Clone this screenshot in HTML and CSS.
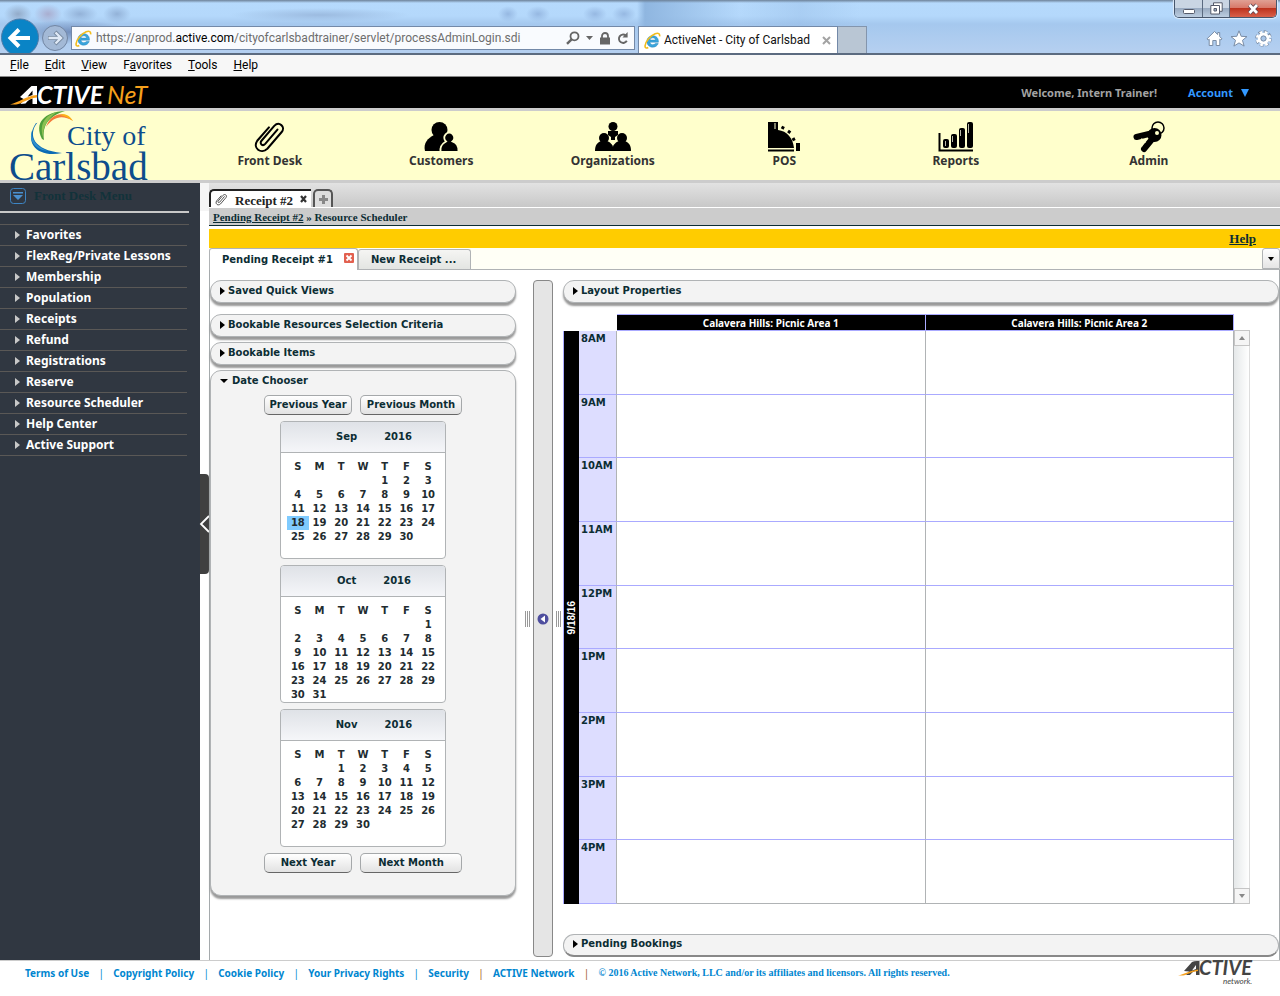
FILE: index.html
```html
<!DOCTYPE html>
<html lang="en">
<head>
<meta charset="utf-8">
<title>ActiveNet - City of Carlsbad</title>
<link rel="stylesheet" href="styles.css">
</head>
<body>
<svg class="defs" width="0" height="0" aria-hidden="true">
  <defs>
    <symbol id="ie" viewBox="0 0 16 16">
      <path d="M13.6 9.6H5.600c.2 1.500 1.300 2.300 2.700 2.300 1 0 1.800-.4 2.300-1.100h2.800c-.8 2.200-2.700 3.500-5.200 3.500C4.900 14.300 2.700 12 2.700 8.900s2.300-5.400 5.500-5.400c3.500 0 5.600 2.500 5.400 6.100zM5.700 7.600h5.100c-.2-1.300-1.100-2.100-2.500-2.100-1.400 0-2.400.8-2.600 2.100z" fill="#3aa5dc" stroke="#1c7fb8" stroke-width=".4"/>
      <path d="M4 14.600c-1.800 1-3.200.5-3-1.600C1.300 9.300 5.800 3.600 10.500 1.700c3-1.200 4.600-.1 4.200 2.500" fill="none" stroke="#f2bd1d" stroke-width="1.500"/>
    </symbol>
    <symbol id="clip" viewBox="0 0 32 30">
      <path d="M23 8 11.500 21.500c-2.500 2.600-5.800-.4-3.500-3L20 4.500c4.500-4.600 11 .8 7 5.800L13.500 26C7.500 31.500-.6 25.500 4 18.500L15 6" fill="none" stroke="currentColor" stroke-width="1.900" stroke-linecap="round"/>
    </symbol>
  </defs>
</svg>

<header class="chrome">
  <div class="titlebar">
    <div class="winctl">
      <button class="min" aria-label="Minimize"><svg width="14" height="8" viewBox="0 0 14 8"><rect x="1.500" y="2.500" width="11" height="4" rx="1" fill="#fff" stroke="#555a6a"/></svg></button>
      <button class="max" aria-label="Restore"><svg width="13" height="13" viewBox="0 0 13 13"><path d="M3.500 3V.8h8.700v8.500H10" fill="#fff" stroke="#555a6a"/><path d="M.8 3.500h8.700v8.500H.8zM4 6.500v2.500h2.500V6.500z" fill="#fff" fill-rule="evenodd" stroke="#555a6a"/></svg></button>
      <button class="cls" aria-label="Close window"><svg width="13" height="12" viewBox="0 0 13 12"><path d="M2.500 2l7.500 8M10 2 2.500 10" stroke="#5b4350" stroke-width="4.400"/><path d="M2.500 2l7.500 8M10 2 2.500 10" stroke="#fff" stroke-width="2.800"/></svg></button>
    </div>
  </div>
  <div class="toolbar">
    <button class="back" aria-label="Back"><svg width="40" height="34" viewBox="0 0 40 34"><circle cx="20" cy="18.500" r="18.500" fill="#0a84c6" stroke="#4e7ba8"/><path d="M11 19h19M19 10.500 10.500 19l8.500 8.500" fill="none" stroke="#fff" stroke-width="4"/></svg></button>
    <button class="fwd" aria-label="Forward"><svg width="28" height="34" viewBox="0 0 28 34"><circle cx="14" cy="19" r="12.500" fill="#a3b9d6" stroke="#7286a3"/><path d="M7 19h12M14 13l6 6-6 6" fill="none" stroke="#76889f" stroke-width="4.200"/><path d="M7.500 19h11M14.500 13.500 20 19l-5.500 5.500" fill="none" stroke="#dfe9f6" stroke-width="2.400"/></svg></button>
    <div class="address">
      <svg width="17" height="17"><use href="#ie"/></svg>
      <span class="url">https://anprod.<b>active.com</b>/cityofcarlsbadtrainer/servlet/processAdminLogin.sdi</span>
      <span class="addr-icons">
        <svg width="14" height="14" viewBox="0 0 14 14"><circle cx="8.500" cy="5.300" r="4" fill="none" stroke="#666" stroke-width="1.800"/><path d="M5.600 8.300 1 12.800" stroke="#666" stroke-width="2.400"/></svg>
        <svg width="7" height="4" viewBox="0 0 7 4"><path d="M0 0h7L3.500 4z" fill="#666"/></svg>
        <svg width="12" height="13" viewBox="0 0 12 13"><path d="M3 6V4a3 3 0 0 1 6 0v2" fill="none" stroke="#666" stroke-width="1.800"/><rect x="1" y="5.500" width="10" height="7" fill="#666"/></svg>
        <svg width="12" height="13" viewBox="0 0 12 13"><path d="M9.800 8.800A4.200 4.200 0 1 1 8.600 3.300" fill="none" stroke="#666" stroke-width="1.900"/><path d="M10.600 0v5.500H5.500z" fill="#666"/></svg>
      </span>
    </div>
    <div class="btab"><svg width="17" height="17"><use href="#ie"/></svg><span>ActiveNet - City of Carlsbad</span><button aria-label="Close tab"><svg width="9" height="9" viewBox="0 0 9 9"><path d="M1 1l7 7M8 1 1 8" stroke="#a3a3a3" stroke-width="2"/></svg></button></div>
    <button class="newtab" aria-label="New tab"></button>
    <div class="tools">
      <button aria-label="Home"><svg width="17" height="17" viewBox="0 0 17 17"><path d="M8.500 1.500 1 8.800l1.200 1.200 1-.8v6.300h3.600v-5h3.400v5h3.600V9.200l1 .8L16 8.800l-2.300-2.200V2.500h-2v2z" fill="#fff" stroke="#7a8da6"/></svg></button>
      <button aria-label="Favorites"><svg width="18" height="17" viewBox="0 0 18 17"><path d="M9 .8l2.200 5.500 5.800.3-4.500 3.700 1.600 5.800L9 12.900l-5.100 3.200 1.600-5.800L1 6.600l5.800-.3z" fill="#fff" stroke="#7a8da6"/></svg></button>
      <button aria-label="Tools"><svg width="17" height="17" viewBox="0 0 17 17"><circle cx="8.500" cy="8.500" r="6.600" fill="none" stroke="#7a8da6" stroke-width="3.400" stroke-dasharray="3.400 1.780"/><circle cx="8.500" cy="8.500" r="6.400" fill="none" stroke="#fff" stroke-width="2.600" stroke-dasharray="2.600 2.430" stroke-dashoffset="-.4"/><circle cx="8.500" cy="8.500" r="4.300" fill="none" stroke="#fff" stroke-width="3"/><circle cx="8.500" cy="8.500" r="2.600" fill="#a9c6e8" stroke="#7a8da6"/></svg></button>
    </div>
  </div>
</header>
<nav class="menubar" aria-label="Browser menu">
  <a href="#"><u>F</u>ile</a><a href="#"><u>E</u>dit</a><a href="#"><u>V</u>iew</a><a href="#">F<u>a</u>vorites</a><a href="#"><u>T</u>ools</a><a href="#"><u>H</u>elp</a>
</nav>

<div class="topbar">
  <svg class="anet" width="144" height="24" viewBox="0 0 144 24" role="img" aria-label="ActiveNet">
    <path d="M10 13 21.500 2h5.500V20h-4.500v-5.500c-4 1-5 3-7 5l-5 .5 4-4.500z" fill="#fff"/><path d="M22.500 6.500v4.500l-5 1.700z" fill="#000"/>
    <path d="M0 20.500c9-2 15-8.500 27-9.500v2.500C17 14.500 13 19.500 6 20.500z" fill="#f7a01c"/>
    <text x="27" y="20" class="an-w">CTIVE</text><text x="97" y="20" class="an-o">NeT</text>
  </svg>
  <span class="welcome">Welcome, Intern Trainer!</span>
  <button class="account">Account <svg width="8" height="8" viewBox="0 0 8 8"><path d="M0 0h8L4 8z" fill="#3399ff"/></svg></button>
</div>

<div class="banner">
  <svg class="city" width="150" height="69" viewBox="0 0 150 69" role="img" aria-label="City of Carlsbad">
    <path d="M37 12c-9 12-4 27 25 30C40 47 22 34 36 12z" fill="#0b6bb4"/><path d="M38 11c-12 10-5 24 10 29C31 38 25 24 38 11z" fill="#2f8fcc"/>
    <path d="M42 28C34 12 44 1 65 0 49 5 42 14 44 29z" fill="#4f9f3a"/><path d="M43 26C39 12 46 4 57 1 48 7 43 15 43 26z" fill="#8cc152"/>
    <path d="M46 16C50 3 64-2 73 10 62 3 53 6 46 16z" fill="#f47b3a"/><path d="M60 4c5-2 10 1 13 6-4-3-8-5-13-6z" fill="#fcb415"/>
    <text x="67" y="34" class="city-a">City of</text><text x="9" y="69" class="city-b">Carlsbad</text>
  </svg>
  <nav class="mainnav">
    <a href="#"><svg width="34" height="32" viewBox="0 0 32 30"><use href="#clip"/></svg>Front Desk</a>
    <a href="#"><svg width="36" height="32" viewBox="0 0 36 32"><circle cx="16.500" cy="9" r="8"/><path d="M11 14h11v7l-2 9H2c-2-8 3-13 9-16z"/><path d="M17.500 31c-1-7 3-9 5.500-10.500a5 5 0 1 1 6.500 0C33 22 36 24 35.500 31z" stroke="#ffc" stroke-width="1.800"/></svg>Customers</a>
    <a href="#"><svg width="36" height="32" viewBox="0 0 36 32"><circle cx="18" cy="5.500" r="4.500"/><path d="M13 10h10v4l-3 2v3h-4v-3l-3-2z"/><circle cx="9" cy="17" r="5"/><circle cx="27" cy="17" r="5"/><path d="M0 30c0-6 2-8 6-10h6c3 1 6 4 6 6 0-2 3-5 6-6h6c4 2 6 4 6 10z"/></svg>Organizations</a>
    <a href="#"><svg width="34" height="32" viewBox="0 0 34 32"><path d="M1 1h10v8c9 1 15 8 16 18H1z"/><path d="M8 2v6" stroke="#ffc"/><path d="M1 28.500h26v2H1z"/><path d="M14.500 6l4 2M21 10l4 3M26 17l2 4" stroke="#000" stroke-width="3" stroke-dasharray="3 2"/><path d="M29 22h4v8h-4z"/></svg>POS</a>
    <a href="#"><svg width="36" height="32" viewBox="0 0 36 32"><path d="M1.500 12v17.500H35" fill="none" stroke="#000" stroke-width="2"/><rect x="5" y="18" width="6" height="9" rx="2"/><rect x="13" y="13" width="6" height="14" rx="2"/><rect x="21" y="7" width="6" height="20" rx="2"/><rect x="29" y="1" width="6" height="26" rx="2"/><path d="M7.500 20v5M14.500 15v6M22.500 9v6M30.500 3v9" stroke="#bba" stroke-width="1"/></svg>Reports</a>
    <a href="#"><svg width="32" height="32" viewBox="0 0 32 32"><circle cx="25" cy="7" r="6" fill="none" stroke="#000" stroke-width="1.500"/><circle cx="21.500" cy="14" r="7"/><path d="M18 12.500 3.500 16M20 17l-9 11" fill="none" stroke="#000" stroke-width="6" stroke-linecap="round"/><path d="M8 19.500l1-2M12.500 18.500l1-1.500M7.500 24l2 1M10.500 20.500l2 1" stroke="#ffc" stroke-width="1.300"/><circle cx="24" cy="12" r="2" fill="#ffc"/></svg>Admin</a>
  </nav>
</div>

<div class="body">
  <aside class="sidebar">
    <h2><svg width="16" height="16" viewBox="0 0 16 16"><rect x=".5" y=".5" width="15" height="15" rx="3" fill="none" stroke="#3d85c4"/><path d="M3 4h10v1.500H3zM3 7h10l-5 5z" fill="#4a90cf"/></svg>Front Desk Menu</h2>
    <ul>
      <li><a href="#">Favorites</a></li><li><a href="#">FlexReg/Private Lessons</a></li><li><a href="#">Membership</a></li><li><a href="#">Population</a></li><li><a href="#">Receipts</a></li><li><a href="#">Refund</a></li><li><a href="#">Registrations</a></li><li><a href="#">Reserve</a></li><li><a href="#">Resource Scheduler</a></li><li><a href="#">Help Center</a></li><li><a href="#">Active Support</a></li>
    </ul>
  </aside>
  <div class="gutter"><button aria-label="Collapse menu"><svg width="9" height="16" viewBox="0 0 9 16"><path d="M9 0 1 8l8 8" fill="none" stroke="#fff" stroke-width="1.800"/></svg></button></div>

  <main class="content">
    <div class="rtabs">
      <div class="rtab"><svg width="13" height="13"><use href="#clip"/></svg><span>Receipt #2</span><button aria-label="Close receipt"><svg width="7" height="8" viewBox="0 0 7 8"><path d="M1 1l5 6M6 1 1 7" stroke="#333" stroke-width="2.200"/></svg></button></div>
      <button class="addtab" aria-label="Add receipt"><svg width="9" height="9" viewBox="0 0 9 9"><path d="M4.500 0v9M0 4.500h9" stroke="#888" stroke-width="3"/></svg></button>
    </div>
    <div class="crumbs"><a href="#">Pending Receipt #2</a> » Resource Scheduler</div>
    <div class="helpbar"><a href="#">Help</a></div>
    <div class="ptabs">
      <div class="ptab on"><span>Pending Receipt #1</span><button aria-label="Close pending receipt"><svg width="10" height="10" viewBox="0 0 10 10"><rect width="10" height="10" rx="1" fill="#e2604f"/><path d="M2.500 2.500l5 5M7.500 2.500l-5 5" stroke="#fff" stroke-width="1.800"/></svg></button></div>
      <button class="ptab">New Receipt ...</button>
      <button class="plist" aria-label="Tab list"><svg width="6" height="4" viewBox="0 0 6 4"><path d="M0 0h6L3 4z"/></svg></button>
    </div>
    <div class="work">
      <div class="left">
        <button class="panel first"><i class="tri"></i>Saved Quick Views</button>
        <button class="panel"><i class="tri"></i>Bookable Resources Selection Criteria</button>
        <button class="panel"><i class="tri"></i>Bookable Items</button>
        <section class="chooser">
          <button class="head"><i class="tri down"></i>Date Chooser</button>
          <div class="btns"><button>Previous Year</button><button>Previous Month</button></div>
          <div class="cal">
            <div class="cal-h"><span>Sep</span><span>2016</span></div>
            <table>
              <tr><th>S</th><th>M</th><th>T</th><th>W</th><th>T</th><th>F</th><th>S</th></tr>
              <tr><td></td><td></td><td></td><td></td><td>1</td><td>2</td><td>3</td></tr>
              <tr><td>4</td><td>5</td><td>6</td><td>7</td><td>8</td><td>9</td><td>10</td></tr>
              <tr><td>11</td><td>12</td><td>13</td><td>14</td><td>15</td><td>16</td><td>17</td></tr>
              <tr><td class="sel">18</td><td>19</td><td>20</td><td>21</td><td>22</td><td>23</td><td>24</td></tr>
              <tr><td>25</td><td>26</td><td>27</td><td>28</td><td>29</td><td>30</td><td></td></tr>
            </table>
          </div>
          <div class="cal">
            <div class="cal-h"><span>Oct</span><span>2016</span></div>
            <table>
              <tr><th>S</th><th>M</th><th>T</th><th>W</th><th>T</th><th>F</th><th>S</th></tr>
              <tr><td></td><td></td><td></td><td></td><td></td><td></td><td>1</td></tr>
              <tr><td>2</td><td>3</td><td>4</td><td>5</td><td>6</td><td>7</td><td>8</td></tr>
              <tr><td>9</td><td>10</td><td>11</td><td>12</td><td>13</td><td>14</td><td>15</td></tr>
              <tr><td>16</td><td>17</td><td>18</td><td>19</td><td>20</td><td>21</td><td>22</td></tr>
              <tr><td>23</td><td>24</td><td>25</td><td>26</td><td>27</td><td>28</td><td>29</td></tr>
              <tr><td>30</td><td>31</td><td></td><td></td><td></td><td></td><td></td></tr>
            </table>
          </div>
          <div class="cal">
            <div class="cal-h"><span>Nov</span><span>2016</span></div>
            <table>
              <tr><th>S</th><th>M</th><th>T</th><th>W</th><th>T</th><th>F</th><th>S</th></tr>
              <tr><td></td><td></td><td>1</td><td>2</td><td>3</td><td>4</td><td>5</td></tr>
              <tr><td>6</td><td>7</td><td>8</td><td>9</td><td>10</td><td>11</td><td>12</td></tr>
              <tr><td>13</td><td>14</td><td>15</td><td>16</td><td>17</td><td>18</td><td>19</td></tr>
              <tr><td>20</td><td>21</td><td>22</td><td>23</td><td>24</td><td>25</td><td>26</td></tr>
              <tr><td>27</td><td>28</td><td>29</td><td>30</td><td></td><td></td><td></td></tr>
            </table>
          </div>
          <div class="btns"><button>Next Year</button><button>Next Month</button></div>
        </section>
      </div>
      <div class="split">
        <i class="grip"></i>
        <button class="bar" aria-label="Collapse left pane"><svg width="12" height="12" viewBox="0 0 12 12"><circle cx="6" cy="6" r="5.500" fill="#4e4e9e"/><path d="M8 2.500v7L3.500 6z" fill="#fff"/></svg></button>
        <i class="grip"></i>
      </div>
      <div class="right">
        <button class="panel"><i class="tri"></i>Layout Properties</button>
        <div class="sched">
          <table>
            <colgroup><col class="c-date"><col class="c-time"><col><col></colgroup>
            <thead><tr><td colspan="2"></td><th>Calavera Hills: Picnic Area 1</th><th>Calavera Hills: Picnic Area 2</th></tr></thead>
            <tbody>
              <tr><th rowspan="9" class="date"><span>9/18/16</span></th><th>8AM</th><td></td><td></td></tr>
              <tr><th>9AM</th><td></td><td></td></tr>
              <tr><th>10AM</th><td></td><td></td></tr>
              <tr><th>11AM</th><td></td><td></td></tr>
              <tr><th>12PM</th><td></td><td></td></tr>
              <tr><th>1PM</th><td></td><td></td></tr>
              <tr><th>2PM</th><td></td><td></td></tr>
              <tr><th>3PM</th><td></td><td></td></tr>
              <tr><th>4PM</th><td></td><td></td></tr>
            </tbody>
          </table>
          <div class="scroll">
            <button aria-label="Scroll up"><svg width="6" height="4" viewBox="0 0 6 4"><path d="M0 4h6L3 0z" fill="#888"/></svg></button>
            <button aria-label="Scroll down"><svg width="6" height="4" viewBox="0 0 6 4"><path d="M0 0h6L3 4z" fill="#888"/></svg></button>
          </div>
        </div>
        <button class="panel last"><i class="tri"></i>Pending Bookings</button>
      </div>
    </div>
  </main>
</div>

<footer class="footer">
  <a href="#">Terms of Use</a><i>|</i><a href="#">Copyright Policy</a><i>|</i><a href="#">Cookie Policy</a><i>|</i><a href="#">Your Privacy Rights</a><i>|</i><a href="#">Security</a><i class="o">|</i><a href="#">ACTIVE Network</a><i class="o">|</i>
  <span class="copy">© 2016 Active Network, LLC and/or its affiliates and licensors. All rights reserved.</span>
  <svg class="fnet" width="80" height="26" viewBox="0 0 80 26" role="img" aria-label="Active network">
    <path d="M6 11 14 2q2-1 5-1h2.500v14H18v-4c-3 0-4 2-6 4H8l3-3.500z" fill="#444"/><path d="M18 5v4l-4 1.500z" fill="#fff"/>
    <path d="M0 15.500c6-1 10-4.500 20-6v1.500c-8 1-11 4-15 4.500z" fill="#f7a01c"/>
    <text x="21" y="15" class="fn-a">CTIVE</text><text x="45" y="24" class="fn-b">network.</text>
  </svg>
</footer>
</body>
</html>
```
FILE: styles.css
```css
* { box-sizing: border-box; }
body {
  margin: 0; min-height: 100vh; display: flex; flex-direction: column;
  background: #fff; color: #0c2d34;
  font: bold 10px/14px "DejaVu Sans", Verdana, sans-serif;
}
button { font: inherit; color: inherit; background: none; border: 0; padding: 0; margin: 0; }
a { color: inherit; text-decoration: none; }
svg { display: block; flex: none; overflow: visible; }
.defs { position: absolute; }

/* browser window */
.chrome {
  height: 55px; border-bottom: 2px solid #5c6b80; overflow: hidden;
  background:
    linear-gradient(180deg, #6d8299 0, transparent 3px),
    radial-gradient(ellipse 60px 12px at 70px 32px, #7490bd, transparent),
    radial-gradient(ellipse 14px 10px at 18px 14px, #93abc9, transparent),
    radial-gradient(ellipse 14px 10px at 48px 14px, #a9aed0, transparent),
    radial-gradient(ellipse 18px 9px at 80px 14px, #93b2d8, transparent),
    radial-gradient(ellipse 14px 9px at 117px 14px, #93b2d8, transparent),
    radial-gradient(ellipse 90px 7px at 320px 15px, #9cbbe0, transparent),
    radial-gradient(ellipse 10px 8px at 508px 14px, #96b8e2, transparent),
    radial-gradient(ellipse 12px 8px at 538px 14px, #96b8e2, transparent),
    radial-gradient(ellipse 12px 8px at 595px 14px, #96b8e2, transparent),
    radial-gradient(ellipse 12px 8px at 624px 14px, #96b8e2, transparent),
    linear-gradient(90deg, transparent 637px, #8fb6e0 645px, transparent 740px, #92b8e255 800px, transparent 860px),
    linear-gradient(180deg, #b6dafd 0, #b4d8fb 16px, #a5c8ee 24px, #b4cff0 50px);
}
.titlebar { display: flex; justify-content: flex-end; height: 19px; padding-right: 3px; }
.winctl { display: flex; height: 18px; border: 1px solid #47566c; border-top: 0; border-radius: 0 0 5px 5px; overflow: hidden; box-shadow: 0 0 1px 1px #dfecfa; }
.winctl button { display: grid; place-items: center; width: 27px; background: linear-gradient(#c9d5e3 45%, #96a8bf 46%, #bccde0); border-right: 1px solid #5a6a80; }
.winctl .min { padding-top: 4px; width: 28px; }
.winctl .cls { width: 46px; border: 0; background: linear-gradient(#e0a094 0, #d8796a 45%, #bb2f1b 46%, #d9604a); }
.toolbar { display: flex; align-items: flex-end; height: 34px; }
.fwd { margin-left: 1px; }
.address {
  display: flex; align-items: center; flex: 0 1 564px; height: 24px; margin: 0 3px 3px 2px; padding: 0 5px 0 3px;
  background: #f9fbfe; border: 1px solid #7389a8; color: #6d6d6d;
  font: 12px/20px Roboto, "Segoe UI", sans-serif;
}
.url { flex: 1; margin-left: 4px; white-space: nowrap; overflow: hidden; }
.url b { font-weight: 400; color: #000; }
.addr-icons { display: flex; align-items: center; gap: 6px; }
.btab {
  display: flex; align-items: center; width: 200px; height: 27px; padding: 0 6px 0 5px; background: #fff;
  border: 1px solid #7389a8; border-bottom: 0; color: #111; font: 12px/20px Roboto, "Segoe UI", sans-serif;
}
.btab span { flex: 1; margin-left: 3px; white-space: nowrap; }
.newtab { width: 29px; height: 27px; background: #b9c6d4; border: 1px solid #8395ad; border-width: 1px 1px 0 0; }
.tools { display: flex; gap: 7px; margin: 0 8px 6px auto; }
.menubar {
  display: flex; gap: 16px; height: 22px; padding-left: 10px; background: #f7f7f7; border-bottom: 1px solid #888;
  color: #000; font: 12px/21px Roboto, "Segoe UI", sans-serif;
}

/* product header */
.topbar { display: flex; align-items: center; height: 31px; padding-right: 31px; background: #000; font: bold 11px/16px "Noto Sans", Tahoma, sans-serif; }
.anet { margin: 7px auto 0 10px; }
.an-w { font: bold italic 25px Lato, sans-serif; fill: #fff; }
.an-o { font: italic 25px Lato, sans-serif; fill: #f7a01c; }
.welcome { color: #a3a3a3; }
.account { display: flex; align-items: center; gap: 8px; margin-left: 31px; color: #39f; }
.banner { display: flex; height: 75px; background: #ffc; border: solid #ccc; border-width: 3px 0; }
.city-a { font: 28px "Liberation Serif", serif; fill: #0d4d8c; }
.city-b { font: 39px "Liberation Serif", serif; fill: #0d4d8c; }
.mainnav { flex: 1; display: grid; grid-template-columns: repeat(5, 4fr) 5fr; margin-left: 34px; padding: 10px 24px 0 0; }
.mainnav a { display: flex; flex-direction: column; align-items: center; color: #333; font: bold 12px/16px "Noto Sans", Tahoma, sans-serif; }
.mainnav a svg { color: #000; }

/* side menu */
.body { display: flex; flex: 1; }
.sidebar { width: 200px; background: #303741; }
.sidebar h2 { display: flex; align-items: center; gap: 8px; height: 30px; margin: 0 11px 11px 0; padding: 0 0 3px 10px; border-bottom: 2px solid #c8c8c8; color: #12323a; font: bold 13px/16px "Liberation Serif", serif; }
.sidebar ul { list-style: none; margin: 0 11px 0 0; padding: 0 2px 0 0; border-top: 1px solid #5a5856; }
.sidebar li { height: 21px; border-bottom: 1px solid #5a5856; }
.sidebar li a { display: flex; align-items: center; gap: 6px; padding-left: 15px; color: #fff; font: bold 12px/20px "Noto Sans", Tahoma, sans-serif; }
.sidebar li a::before { content: ""; border: solid transparent; border-width: 4px 0 4px 5px; border-left-color: #c8c8c8; }
.gutter { width: 9px; padding-top: 291px; background: linear-gradient(#f5f5f5 28px, #fff 28px); }
.gutter button { display: grid; place-items: center; width: 9px; height: 100px; background: #404040; border-radius: 0 4px 4px 0; }

/* receipt tabs */
.content { flex: 1; min-width: 0; display: flex; flex-direction: column; }
.rtabs { display: flex; align-items: flex-end; gap: 2px; height: 25px; background: linear-gradient(#e2e2e2, #c8c8c8); border-bottom: 1px solid #fff; }
.rtab { display: flex; align-items: center; height: 18px; padding: 0 4px; background: #fff; border: solid #222; border-width: 2px 0 0 2px; border-radius: 5px 0 0 0; font: bold 13px/16px "Liberation Serif", serif; color: #222; }
.rtab span { margin: 3px 7px 0; }
.addtab { display: grid; place-items: center; width: 20px; height: 18px; border: 2px solid #555; border-bottom: 0; border-radius: 5px 5px 0 0; background: #ddd; }
.crumbs { height: 18px; padding-left: 4px; background: #ccc; border-bottom: 1px solid #0c2d34; font: bold 11px/18px "Liberation Serif", serif; }
.crumbs a, .helpbar a { text-decoration: underline; }
.helpbar { height: 19px; margin-top: 3px; padding-right: 24px; background: #fc0; text-align: right; font: bold 13px/20px "Liberation Serif", serif; }
.ptabs { display: flex; align-items: flex-end; height: 22px; background: #fffff6; border-bottom: 1px solid #b0b3b5; }
.ptab { height: 20px; padding: 0 14px 0 12px; border: 1px solid #b0b3b5; border-bottom: 0; border-radius: 3px 3px 0 0; background: linear-gradient(#f5f5f3, #e3e5e2); }
.ptab.on { display: flex; align-items: center; height: 22px; margin-bottom: -1px; padding-right: 3px; background: #fff; }
.ptab.on button { margin: 0 0 4px 11px; }
.plist { display: grid; place-items: center; width: 18px; height: 21px; margin-left: auto; border: 1px solid #b0b3b5; border-radius: 3px 3px 0 0; background: linear-gradient(#fff, #e5e5e5); }

/* scheduler workspace */
.work { flex: 1; display: flex; padding-top: 10px; border: solid #a5aaac; border-width: 0 1px; }
.left { width: 306px; }
.panel { display: flex; align-items: center; width: 100%; height: 23px; margin-bottom: 5px; padding: 0 10px 2px 9px; background: #f3f3f3; border: 1px solid #b0b3b5; border-radius: 11px; box-shadow: 0 3px 2px #999; }
.panel.first { margin-bottom: 11px; }
.tri { margin-right: 3px; border: solid transparent; border-width: 4px 0 4px 5px; border-left-color: #000; }
.tri.down { margin-right: 4px; border-width: 4px 4px 0; border-color: #000 transparent; }
.chooser { height: 526px; padding-bottom: 10px; background: #f3f3f3; border: 1px solid #b0b3b5; border-radius: 11px; box-shadow: 0 3px 2px #999; }
.head { display: flex; align-items: center; height: 20px; margin-bottom: 4px; padding-left: 9px; }
.btns { display: flex; justify-content: center; gap: 8px; margin-bottom: 6px; }
.btns button { width: 102px; height: 20px; background: linear-gradient(#fff, #e2e2e2); border: 1px solid #a5a8aa; border-bottom-color: #666; border-radius: 5px; white-space: nowrap; }
.btns button:first-child { width: 88px; }
.cal { width: 166px; height: 138px; margin: 0 auto 6px; background: #fff; border: 1px solid #b0b3b5; border-radius: 4px; overflow: hidden; }
.cal-h { display: flex; justify-content: center; gap: 27px; height: 31px; padding-left: 22px; background: linear-gradient(#dfe2e7, #f5f6f9); border-bottom: 1px solid #b0b3b5; line-height: 30px; }
.cal table { width: 152px; margin: 7px auto 0; border-spacing: 0; table-layout: fixed; color: #222c30; }
.cal th, .cal td { height: 14px; padding: 0; text-align: center; line-height: 14px; }
.cal .sel { background: #7fcbff; }
.split { display: flex; align-items: center; gap: 3px; margin: 0 2px 3px 9px; }
.grip { width: 5px; height: 16px; background: repeating-linear-gradient(90deg, #999 0 1px, #fff 1px 2px); }
.bar { display: grid; place-items: center; align-self: stretch; width: 20px; background: #e5e5e5; border: 1px solid #888; border-radius: 4px; }
.right { flex: 1; min-width: 0; display: flex; flex-direction: column; }
.sched { display: flex; margin: 6px 29px 30px 0; }
.sched table { flex: 1; height: 590px; table-layout: fixed; border-spacing: 0; }
.c-date { width: 16px; }
.c-time { width: 38px; }
.sched th, .sched td { padding: 0; }
.sched thead th { height: 17px; background: #000; color: #fff; border: solid #aaf; border-width: 1px 1px 1px 0; font: bold 10px/14px "Noto Sans", Tahoma, sans-serif; }
.sched tbody th { background: #ddf; border-right: 1px solid #b0b3b5; border-bottom: 1px solid #aaf; padding: 1px 0 0 2px; text-align: left; vertical-align: top; }
.sched tbody td { border: solid #b0b3b5; border-width: 0 1px 1px 0; border-bottom-color: #aaf; }
.sched tbody tr:last-child td { border-bottom-color: #b0b3b5; }
.sched tbody .date { background: #000; color: #fff; border: 0; border-left: 1px solid #aaf; padding: 0; vertical-align: middle; font: bold 10px/14px "Liberation Sans", sans-serif; }
.date span { display: block; margin: auto; writing-mode: vertical-rl; rotate: 180deg; }
.scroll { display: flex; flex-direction: column; justify-content: space-between; width: 16px; margin-top: 16px; background: linear-gradient(90deg, #e5e8e9, #fff); border-right: 1px solid #ddd; }
.scroll button { display: grid; place-items: center; width: 16px; height: 16px; background: #f5f5f5; border: 1px solid #c5c5c5; }
.panel.last { margin: auto 0 3px; box-shadow: none; border-bottom: 2px solid #888; }

.footer { display: flex; align-items: center; height: 36px; padding: 0 22px 11px 25px; border-top: 1px solid #ccc; color: #0086d0; font: bold 10px/14px "Noto Sans", Tahoma, sans-serif; white-space: nowrap; }
.footer i { width: 24px; text-align: center; font-style: normal; font-weight: 400; }
.footer .o { color: #a65a2a; }
.copy { font: bold 10px/14px "Liberation Serif", serif; }
.fnet { margin: 0 0 0 auto; }
.fn-a { font: bold italic 20px Lato, sans-serif; fill: #444; }
.fn-b { font: italic 8px Lato, sans-serif; fill: #444; }
```
